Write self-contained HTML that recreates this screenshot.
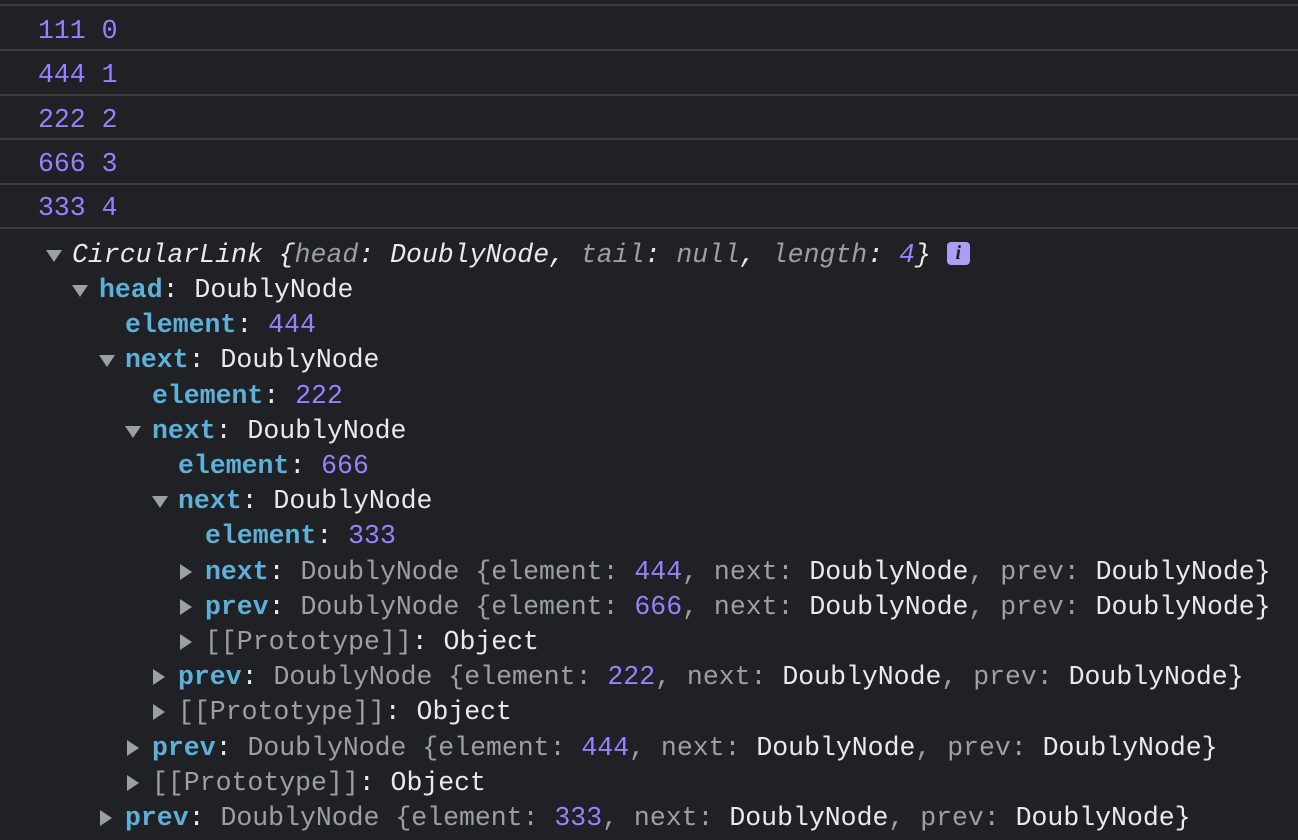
<!DOCTYPE html><html><head><meta charset="utf-8"><style>
html,body{margin:0;width:1298px;height:840px;overflow:hidden;background:#202124;}
#w{position:relative;width:1298px;height:840px;overflow:hidden;font-family:"Liberation Mono","DejaVu Sans Mono",monospace;font-size:26.5px;color:#e8eaed}
.r{position:absolute;left:0;width:1298px;border-top:2px solid #3b3c3f;box-sizing:border-box}
.l{position:absolute;white-space:pre;line-height:35px;height:35px}
.n{color:#9980ff}.k{color:#5db0d7;font-weight:bold}.g{color:#9aa0a6}.i{font-style:italic}
.t{position:absolute;width:0;height:0}
.td{border-left:8px solid transparent;border-right:8px solid transparent;border-top:12px solid #9aa0a6}
.tr{border-top:8px solid transparent;border-bottom:8px solid transparent;border-left:12px solid #9aa0a6}
.info{display:inline-block;width:23px;height:23px;background:#a9a0f5;border-radius:4px;color:#202124;font-weight:bold;font-style:italic;font-family:"Liberation Serif",serif;font-size:20px;line-height:23px;text-align:center;vertical-align:3px;margin-left:16px}
</style></head><body><div id="w">
<div class="r" style="top:4px"></div>
<div class="l n" style="left:38px;top:14px">111 0</div>
<div class="r" style="top:49px"></div>
<div class="l n" style="left:38px;top:58px">444 1</div>
<div class="r" style="top:94px"></div>
<div class="l n" style="left:38px;top:103px">222 2</div>
<div class="r" style="top:138px"></div>
<div class="l n" style="left:38px;top:147px">666 3</div>
<div class="r" style="top:183px"></div>
<div class="l n" style="left:38px;top:191px">333 4</div>
<div class="r" style="top:227px"></div>

<div class="t td" style="left:46px;top:250px"></div>
<div class="l i" style="left:72px;top:238px">CircularLink {<span class="g">head</span>: DoublyNode, <span class="g">tail</span>: <span class="g">null</span>, <span class="g">length</span>: <span class="n">4</span>}<span class="info">i</span></div>

<div class="t td" style="left:72px;top:285px"></div>
<div class="l" style="left:99px;top:273px"><span class="k">head</span>: DoublyNode</div>
<div class="l" style="left:125px;top:308px"><span class="k">element</span>: <span class="n">444</span></div>
<div class="t td" style="left:99px;top:355px"></div>
<div class="l" style="left:125px;top:343px"><span class="k">next</span>: DoublyNode</div>
<div class="l" style="left:152px;top:379px"><span class="k">element</span>: <span class="n">222</span></div>
<div class="t td" style="left:125px;top:426px"></div>
<div class="l" style="left:152px;top:414px"><span class="k">next</span>: DoublyNode</div>
<div class="l" style="left:178px;top:449px"><span class="k">element</span>: <span class="n">666</span></div>
<div class="t td" style="left:152px;top:496px"></div>
<div class="l" style="left:178px;top:484px"><span class="k">next</span>: DoublyNode</div>
<div class="l" style="left:205px;top:519px"><span class="k">element</span>: <span class="n">333</span></div>
<div class="t tr" style="left:180px;top:564px"></div>
<div class="l" style="left:205px;top:555px"><span class="k">next</span>: <span class="g">DoublyNode {element: </span><span class="n">444</span><span class="g">, next: </span>DoublyNode<span class="g">, prev: </span>DoublyNode}</div>
<div class="t tr" style="left:180px;top:599px"></div>
<div class="l" style="left:205px;top:590px"><span class="k">prev</span>: <span class="g">DoublyNode {element: </span><span class="n">666</span><span class="g">, next: </span>DoublyNode<span class="g">, prev: </span>DoublyNode}</div>
<div class="t tr" style="left:180px;top:634px"></div>
<div class="l" style="left:205px;top:625px"><span class="g">[[Prototype]]</span>: Object</div>
<div class="t tr" style="left:153px;top:669px"></div>
<div class="l" style="left:178px;top:660px"><span class="k">prev</span>: <span class="g">DoublyNode {element: </span><span class="n">222</span><span class="g">, next: </span>DoublyNode<span class="g">, prev: </span>DoublyNode}</div>
<div class="t tr" style="left:153px;top:704px"></div>
<div class="l" style="left:178px;top:695px"><span class="g">[[Prototype]]</span>: Object</div>
<div class="t tr" style="left:127px;top:740px"></div>
<div class="l" style="left:152px;top:731px"><span class="k">prev</span>: <span class="g">DoublyNode {element: </span><span class="n">444</span><span class="g">, next: </span>DoublyNode<span class="g">, prev: </span>DoublyNode}</div>
<div class="t tr" style="left:127px;top:775px"></div>
<div class="l" style="left:152px;top:766px"><span class="g">[[Prototype]]</span>: Object</div>
<div class="t tr" style="left:100px;top:810px"></div>
<div class="l" style="left:125px;top:801px"><span class="k">prev</span>: <span class="g">DoublyNode {element: </span><span class="n">333</span><span class="g">, next: </span>DoublyNode<span class="g">, prev: </span>DoublyNode}</div>
<div class="l" style="left:125px;top:836px"><span class="g">[[Prototype]]</span>: Object</div>
</div></body></html>
